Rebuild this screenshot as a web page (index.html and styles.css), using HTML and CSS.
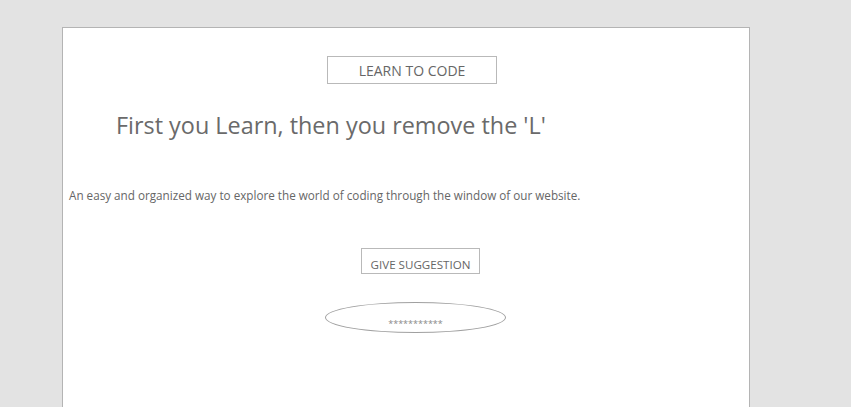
FILE: index.html
```html
<!DOCTYPE html>
<html>
<head>
<meta charset="utf-8">
<link rel="stylesheet" href="styles.css">
</head>
<body>
<main class="panel">
  <div class="btn-row"><a class="learn-btn">LEARN TO CODE</a></div>
  <h1 class="title">First you Learn, then you remove the 'L'</h1>
  <p class="lead">An easy and organized way to explore the world of coding through the window of our website.</p>
  <div class="suggest-row"><a class="suggest-btn">GIVE SUGGESTION</a></div>
  <div class="oval-row"><div class="oval">***********</div></div>
</main>
</body>
</html>
```
FILE: styles.css
```css
html, body {
  margin: 0;
  padding: 0;
  background: #e3e3e3;
  height: 100%;
  overflow: hidden;
}
body {
  padding-top: 27px;
  box-sizing: border-box;
  font-family: "Open Sans", "Noto Sans", sans-serif;
  color: #666;
}
.panel {
  margin-left: 62px;
  width: 686px;
  height: 380px;
  background: #fff;
  border: 1px solid #b4b4b4;
  border-bottom: none;
}
.btn-row {
  display: flex;
  padding-left: 264px;
  padding-top: 28px;
}
.learn-btn {
  display: flex;
  align-items: center;
  justify-content: center;
  width: 170px;
  height: 28px;
  box-sizing: border-box;
  border: 1px solid #b9b9b9;
  font-size: 14px;
  color: #666;
}
.title {
  margin: 0;
  padding-left: 53px;
  padding-top: 24px;
  font-size: 23.4px;
  font-weight: 400;
  line-height: 34px;
  color: #6a6a6a;
}
.lead {
  margin: 0;
  padding-left: 6px;
  padding-top: 45px;
  font-size: 11.7px;
  line-height: 16px;
  color: #666;
}
.suggest-row {
  display: flex;
  padding-left: 298px;
  padding-top: 45px;
}
.suggest-btn {
  display: flex;
  align-items: flex-end;
  justify-content: center;
  width: 119px;
  height: 26px;
  box-sizing: border-box;
  border: 1px solid #b9b9b9;
  font-size: 11.6px;
  line-height: 16px;
  padding-bottom: 0;
  color: #666;
}
.oval-row {
  display: flex;
  padding-left: 262px;
  padding-top: 28px;
}
.oval {
  width: 181px;
  height: 31px;
  box-sizing: border-box;
  border: 1px solid #a0a0a0;
  border-radius: 50%;
  display: flex;
  align-items: flex-end;
  justify-content: center;
  padding-bottom: 2px;
  font-size: 9px;
  color: #888;
}
```
